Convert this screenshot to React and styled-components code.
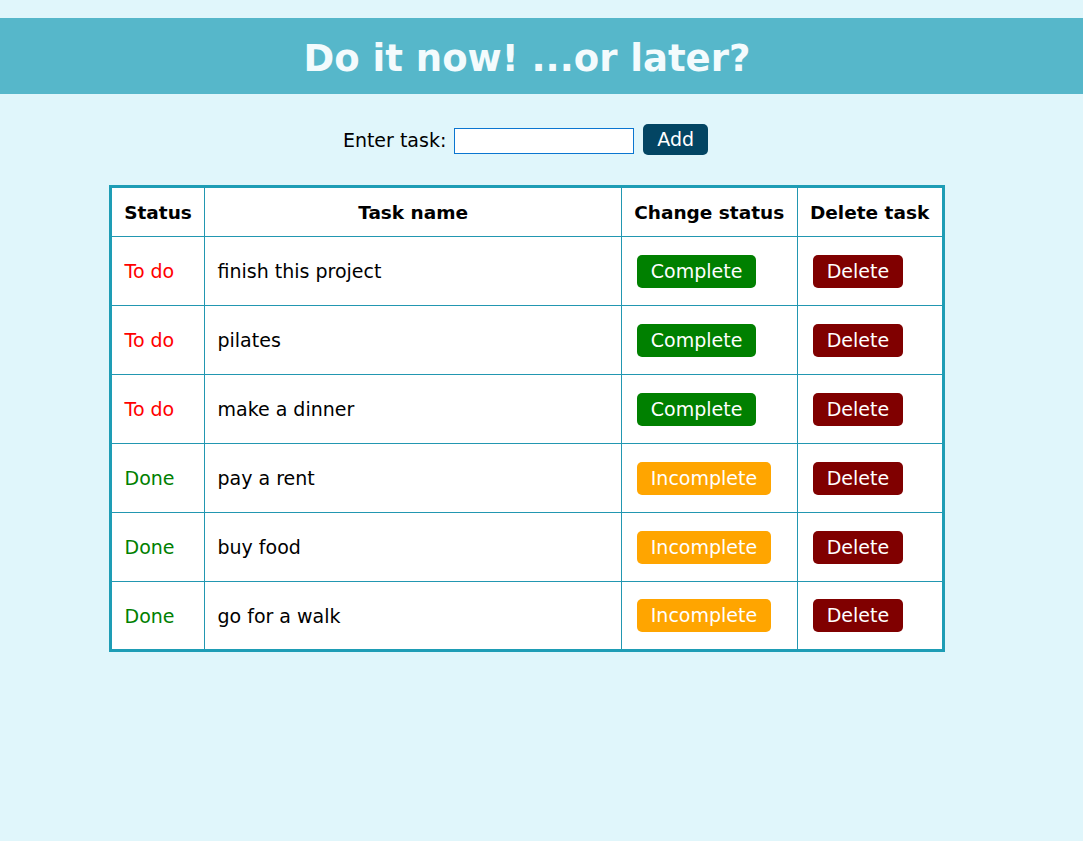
import React, { useState } from 'react';
import styled, { createGlobalStyle } from 'styled-components';

const GlobalStyles = createGlobalStyle`
    body {
        margin: 0;
        background: #e0f6fb;
        font-family: 'DejaVu Sans', Verdana, sans-serif;
    }
`

const Page = styled.div`
    padding-top: 18px;
    padding-bottom: 40px;
`

const Header = styled.header`
    height: 76px;
    background: #56b7ca;
    display: flex;
    align-items: center;
    justify-content: center;
    padding-right: 29px;
`

const Title = styled.h1`
    margin: 4px 0 0;
    font-size: 37px;
    font-weight: bold;
    color: #f3fbfd;
`

const Main = styled.main`
    width: calc(100% - 30px);
    display: flex;
    flex-direction: column;
    align-items: center;
`

const Form = styled.form`
    display: flex;
    align-items: center;
    margin-top: 30px;
    margin-right: 2px;
    font-size: 19px;
    color: #000;
`

const Label = styled.label`
    margin-right: 8px;
`

const Input = styled.input`
    width: 180px;
    height: 26px;
    box-sizing: border-box;
    border: 1px solid #0b76d0;
    background: #fff;
    margin-right: 9px;
    margin-top: 2px;
`

const Button = styled.button`
    border: none;
    border-radius: 5px;
    color: #fff;
    font-family: 'DejaVu Sans', Verdana, sans-serif;
    font-size: 19px;
    line-height: 21px;
    padding: ${(props) => props.pad || '6px 14px'};
    background: ${(props) => props.bg};
    cursor: pointer;
`

const Table = styled.table`
    margin-top: 30px;
    width: 836px;
    border-collapse: collapse;
    border: 3px solid #1e9db5;
    background: #fff;
    font-size: 19px;
`

const Th = styled.th`
    border: 1px solid #2297b1;
    height: 50px;
    padding: 0 12px;
    font-size: 18.5px;
    font-weight: bold;
    text-align: center;
    box-sizing: border-box;
`

const Td = styled.td`
    border: 1px solid #2297b1;
    height: 69px;
    padding: 0 12px 0 ${(props) => props.indent || '12px'};
    color: ${(props) => props.color || '#000'};
    box-sizing: border-box;
`

const ButtonCell = styled(Td)`
    padding: 0 15px;
`

const initialTasks = [
    { name: 'finish this project', done: false },
    { name: 'pilates', done: false },
    { name: 'make a dinner', done: false },
    { name: 'pay a rent', done: true },
    { name: 'buy food', done: true },
    { name: 'go for a walk', done: true },
];

export default function App() {
    const [tasks, setTasks] = useState(initialTasks);
    const [text, setText] = useState('');

    const add = (e) => {
        e.preventDefault();
        if (!text.trim()) return;
        setTasks([...tasks, { name: text, done: false }]);
        setText('');
    };

    const toggle = (i) =>
        setTasks(tasks.map((t, j) => (j === i ? { ...t, done: !t.done } : t)));

    const remove = (i) => setTasks(tasks.filter((_, j) => j !== i));

    return (
        <Page>
            <GlobalStyles />
            <Header>
                <Title>Do it now! ...or later?</Title>
            </Header>
            <Main>
                <Form onSubmit={add}>
                    <Label>Enter task:</Label>
                    <Input value={text} onChange={(e) => setText(e.target.value)} />
                    <Button type="submit" bg="#034563" pad="5px 14px">Add</Button>
                </Form>

                <Table>
                    <colgroup>
                        <col style={{ width: 95 }} />
                        <col style={{ width: 419 }} />
                        <col style={{ width: 176 }} />
                        <col style={{ width: 146 }} />
                    </colgroup>
                    <thead>
                        <tr>
                            <Th>Status</Th>
                            <Th>Task name</Th>
                            <Th>Change status</Th>
                            <Th>Delete task</Th>
                        </tr>
                    </thead>
                    <tbody>
                        {tasks.map((t, i) => (
                            <tr key={i}>
                                <Td indent="13px" color={t.done ? '#008000' : '#ff0000'}>
                                    {t.done ? 'Done' : 'To do'}
                                </Td>
                                <Td>{t.name}</Td>
                                <ButtonCell>
                                    <Button
                                        bg={t.done ? '#ffa500' : '#008000'}
                                        onClick={() => toggle(i)}
                                    >
                                        {t.done ? 'Incomplete' : 'Complete'}
                                    </Button>
                                </ButtonCell>
                                <ButtonCell>
                                    <Button bg="#800000" onClick={() => remove(i)}>
                                        Delete
                                    </Button>
                                </ButtonCell>
                            </tr>
                        ))}
                    </tbody>
                </Table>
            </Main>
        </Page>
    );
}
